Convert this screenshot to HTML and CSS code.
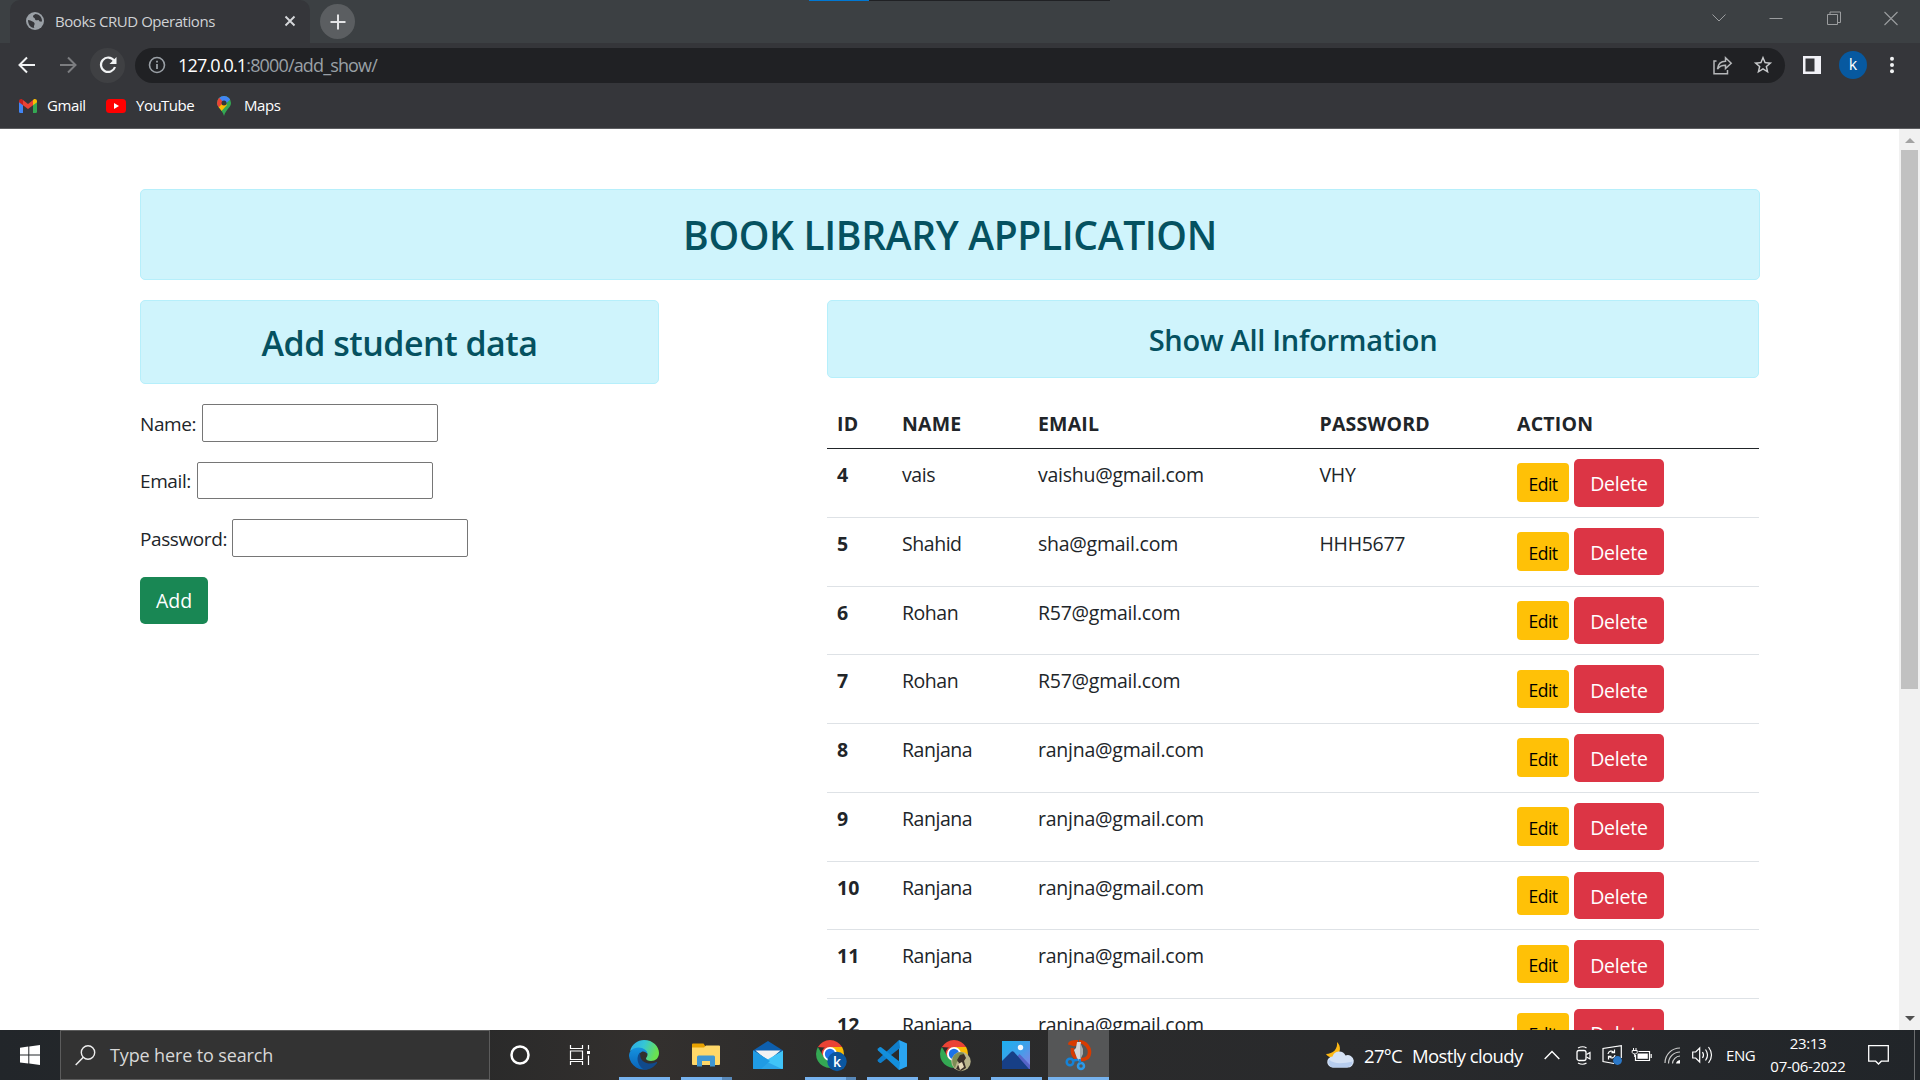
FILE: index.html
```html
<!DOCTYPE html>
<html lang="en">
<head>
<meta charset="utf-8">
<title>Books CRUD Operations</title>
<link rel="stylesheet" href="styles.css">
</head>
<body>
<header class="browser">
  <div class="tabstrip">
    <div class="tab">
      <svg class="tab-globe" viewBox="0 0 18 18" width="18" height="18"><circle cx="9" cy="9" r="9" fill="#9aa0a6"/><path d="M2 8c2 0 3 1 4.500 1.500S9 11 8.500 12.500 7.500 15 8.500 16C5 16 2 13 2 8zM9.500 2c-1 1-2.500 1-2.500 2.500S9 5.500 9 7s2 1.500 3 1 1 1.500 2 1.500 1.500.5 2-.5C16 5 13 2 9.500 2z" fill="#35363a"/></svg>
      <span class="tab-title">Books CRUD Operations</span>
      <svg class="tab-close" viewBox="0 0 12 12" width="12" height="12"><path d="M1.500 1.500l9 9M10.500 1.500l-9 9" stroke="#d5d7da" stroke-width="1.900"/></svg>
    </div>
    <div class="newtab"><svg viewBox="0 0 16 16" width="16" height="16"><path d="M8 .5v15M.5 8h15" stroke="#e3e4e6" stroke-width="2"/></svg></div>
    <div class="snap"><i class="snap-done"></i></div>
    <div class="winctl">
      <svg viewBox="0 0 14 14" width="14" height="14"><path d="M.5 3.500L7 10l6.500-6.500" fill="none" stroke="#9b9d9f"/></svg>
      <svg viewBox="0 0 14 14" width="14" height="14"><path d="M.5 7.500h13" stroke="#9b9d9f"/></svg>
      <svg viewBox="0 0 14 14" width="14" height="14"><path d="M.5 3.500h10v10H.5zM3 3V1h10.500v10.500H11" fill="none" stroke="#9b9d9f"/></svg>
      <svg viewBox="0 0 14 14" width="14" height="14"><path d="M.5 1l13 13M13.500 1l-13 13" stroke="#9b9d9f" stroke-width="1.100"/></svg>
    </div>
  </div>
  <div class="toolbar">
    <svg class="nav-back" viewBox="0 0 18 18" width="18" height="18"><path d="M17 9H2M9 1.500L1.500 9 9 16.500" fill="none" stroke="#f1f3f4" stroke-width="2"/></svg>
    <svg class="nav-fwd" viewBox="0 0 18 18" width="18" height="18"><path d="M1 9h15M9 1.500L16.500 9 9 16.500" fill="none" stroke="#7c7d80" stroke-width="2"/></svg>
    <span class="nav-reload"><svg viewBox="0 0 18 18" width="18" height="18"><path d="M15 4.500A7.200 7.200 0 1 0 16 11" fill="none" stroke="#f1f3f4" stroke-width="2.200"/><path d="M17.500 1v7h-7z" fill="#f1f3f4"/></svg></span>
    <div class="omnibox">
      <svg viewBox="0 0 18 18" width="18" height="18"><circle cx="9" cy="9" r="7.500" fill="none" stroke="#9aa0a6" stroke-width="1.600"/><path d="M9 8v5M9 4.700v1.900" stroke="#9aa0a6" stroke-width="1.800"/></svg>
      <span class="url"><b>127.0.0.1</b>:8000/add_show/</span>
      <svg class="share" viewBox="0 0 20 19" width="20" height="19"><path d="M3.500 5H1v12.700h13.500V14" fill="none" stroke="#b5b7b9" stroke-width="1.500"/><path d="M4.500 13c.6-5 3.500-7.800 8-7.800V1.800l5.700 5.400-5.700 5.300V9.300c-3.500 0-6 .9-8 3.700z" fill="none" stroke="#b5b7b9" stroke-width="1.500"/></svg>
      <svg class="star" viewBox="0 0 24 24" width="22" height="22"><path d="M22 9.240l-7.190-.62L12 2 9.190 8.630 2 9.240l5.460 4.730L5.820 21 12 17.270 18.180 21l-1.630-7.030L22 9.240zM12 15.400l-3.760 2.270 1-4.280-3.320-2.880 4.380-.38L12 6.100l1.710 4.040 4.380.38-3.320 2.880 1 4.280L12 15.400z" fill="#c8cacc"/></svg>
    </div>
    <svg class="panel" viewBox="0 0 18 18" width="18" height="18"><path d="M0 0h18v18H0zM2.500 2.500v13h9v-13z" fill="#f1f1f6" fill-rule="evenodd"/></svg>
    <span class="avatar">k</span>
    <svg class="dots" viewBox="0 0 4 18" width="4" height="18"><circle cx="2" cy="2.700" r="2" fill="#f1f3f4"/><circle cx="2" cy="9" r="2" fill="#f1f3f4"/><circle cx="2" cy="15.300" r="2" fill="#f1f3f4"/></svg>
  </div>
  <nav class="bookmarks">
    <svg viewBox="0 0 18 14" width="18" height="14"><path d="M0 2v10.500Q0 14 1.300 14H4V5z" fill="#4285f4"/><path d="M18 2v10.500q0 1.500-1.300 1.500H14V5z" fill="#34a853"/><path d="M4 1l5 4 5-4v5.200L9 10 4 6.200z" fill="#ea4335"/><path d="M0 2.200C0 .3 2 -.5 3.400.5L4 1v5.200L0 3.300z" fill="#c5221f"/><path d="M18 2.200C18 .3 16-.5 14.600.5L14 1v5.200l4-2.900z" fill="#fbbc04"/></svg>
    <span class="bm-gmail">Gmail</span>
    <svg viewBox="0 0 20 14" width="20" height="14"><rect width="20" height="14" rx="3.500" fill="#f00"/><path d="M8 4l5 3-5 3z" fill="#fff"/></svg>
    <span class="bm-yt">YouTube</span>
    <svg viewBox="0 0 14 20" width="14" height="20"><defs><clipPath id="pin"><path d="M7 0a7 7 0 0 1 7 7c0 4.500-5 6-7 13C5 13 0 11.500 0 7a7 7 0 0 1 7-7z"/></clipPath></defs><g clip-path="url(#pin)"><path d="M0 0h14v20H0z" fill="#34a853"/><path d="M0 0h14v3L7 9 1.500 3z" fill="#4285f4"/><path d="M0 3l2-1.500L7 7l-5.500 6L0 10z" fill="#ea4335"/><path d="M1 12l6-6 3 3-6.500 7z" fill="#fbbc04"/></g><circle cx="7" cy="7" r="2.500" fill="#35363a"/></svg>
    <span class="bm-maps">Maps</span>
  </nav>
</header>

<div class="viewport">
  <main class="page">
    <h1 class="alert title">BOOK LIBRARY APPLICATION</h1>
    <div class="columns">
      <section class="add">
        <h2 class="alert add-title">Add student data</h2>
        <form class="form">
          <div class="field"><label for="name">Name:</label><input id="name" type="text"></div>
          <div class="field field-email"><label for="email">Email:</label><input id="email" type="email"></div>
          <div class="field field-pass"><label for="password">Password:</label><input id="password" type="password"></div>
          <button class="btn btn-success" type="button">Add</button>
        </form>
      </section>
      <section class="list">
        <h3 class="alert list-title">Show All Information</h3>
        <table class="table">
          <colgroup><col class="c-id"><col class="c-name"><col class="c-email"><col class="c-pass"><col></colgroup>
          <thead><tr><th>ID</th><th>NAME</th><th>EMAIL</th><th>PASSWORD</th><th>ACTION</th></tr></thead>
          <tbody>
            <tr><th>4</th><td>vais</td><td class="mail">vaishu@gmail.com</td><td class="pass">VHY</td><td><div class="actions"><button class="btn btn-warning">Edit</button><button class="btn btn-danger">Delete</button></div></td></tr>
            <tr><th>5</th><td>Shahid</td><td class="mail">sha@gmail.com</td><td class="pass">HHH5677</td><td><div class="actions"><button class="btn btn-warning">Edit</button><button class="btn btn-danger">Delete</button></div></td></tr>
            <tr><th>6</th><td>Rohan</td><td class="mail">R57@gmail.com</td><td></td><td><div class="actions"><button class="btn btn-warning">Edit</button><button class="btn btn-danger">Delete</button></div></td></tr>
            <tr><th>7</th><td>Rohan</td><td class="mail">R57@gmail.com</td><td></td><td><div class="actions"><button class="btn btn-warning">Edit</button><button class="btn btn-danger">Delete</button></div></td></tr>
            <tr><th>8</th><td>Ranjana</td><td class="mail">ranjna@gmail.com</td><td></td><td><div class="actions"><button class="btn btn-warning">Edit</button><button class="btn btn-danger">Delete</button></div></td></tr>
            <tr><th>9</th><td>Ranjana</td><td class="mail">ranjna@gmail.com</td><td></td><td><div class="actions"><button class="btn btn-warning">Edit</button><button class="btn btn-danger">Delete</button></div></td></tr>
            <tr><th>10</th><td>Ranjana</td><td class="mail">ranjna@gmail.com</td><td></td><td><div class="actions"><button class="btn btn-warning">Edit</button><button class="btn btn-danger">Delete</button></div></td></tr>
            <tr><th>11</th><td>Ranjana</td><td class="mail">ranjna@gmail.com</td><td></td><td><div class="actions"><button class="btn btn-warning">Edit</button><button class="btn btn-danger">Delete</button></div></td></tr>
            <tr><th>12</th><td>Ranjana</td><td class="mail">ranjna@gmail.com</td><td></td><td><div class="actions"><button class="btn btn-warning">Edit</button><button class="btn btn-danger">Delete</button></div></td></tr>
          </tbody>
        </table>
      </section>
    </div>
  </main>
  <div class="scrollbar">
    <svg viewBox="0 0 10 5" width="10" height="5"><path d="M0 5l5-5 5 5z" fill="#a3a3a3"/></svg>
    <i class="thumb"></i>
    <svg class="down" viewBox="0 0 10 5" width="10" height="5"><path d="M0 0l5 5 5-5z" fill="#505050"/></svg>
  </div>
</div>

<footer class="taskbar">
  <div class="start"><svg viewBox="0 0 20 20" width="20" height="20"><path d="M0 2.700L8.300 1.600v8H0zM9.300 1.400L20 0v9.600H9.300zM0 10.500h8.300v8L0 17.400zM9.300 10.500H20V20L9.300 18.600z" fill="#fff"/></svg></div>
  <div class="search"><svg viewBox="0 0 21 21" width="21" height="21"><circle cx="13" cy="7.500" r="6.700" fill="none" stroke="#eee" stroke-width="1.400"/><path d="M8.300 12.300L.7 20" stroke="#eee" stroke-width="1.500"/></svg><span>Type here to search</span></div>
  <svg class="cortana" viewBox="0 0 20 20" width="20" height="20"><circle cx="10" cy="10" r="8.500" fill="none" stroke="#fff" stroke-width="2.500"/></svg>
  <svg class="taskview" viewBox="0 0 20 20" width="20" height="20"><path d="M.5 0v3.500h12V0M.5 6h12v8.500H.5zM.5 20v-3.500h12V20M18.500 0v4.500M18.500 10.500V20" fill="none" stroke="#fff" stroke-width="1.200"/><path d="M17 6h3v3h-3z" fill="#fff"/></svg>
  <div class="apps">
    <div class="app run">
      <svg viewBox="0 0 30 30" width="30" height="30"><defs><linearGradient id="e1" x1="0" y1="0" x2="1" y2=".3"><stop offset="0" stop-color="#2ba6e8"/><stop offset=".5" stop-color="#35c6d6"/><stop offset="1" stop-color="#6ae250"/></linearGradient><linearGradient id="e2" x1="0" y1="0" x2="0" y2="1"><stop offset="0" stop-color="#1593e0"/><stop offset="1" stop-color="#0a63b8"/></linearGradient></defs><path d="M1 11C3 4 8.500 0 15 0c9 0 15 6.500 15 13 0 5-3.500 8-8 8-3 0-5-1.200-5-2.500 0-1 1.500-1.500 1.500-4C18.500 11 14 9 10 9c-4 0-7.500 1.500-9 2z" fill="url(#e1)"/><path d="M0 16C0 11 4 7.500 9.500 7.500c5 0 9 3 9 6.500-1.500-2-4-3-6-2-3 1.500-4 5.500-2 9.500 2 4.500 6 7 10 7A15 15 0 0 1 0 16z" fill="url(#e2)"/><path d="M11 12.500c-4 4-3.500 12 4 17.300 5 .3 10-2.300 13-6.800.4-.8-.2-1.200-1-.8-7 3-14 .5-15.500-5-.4-1.700-.4-3.200-.5-4.700z" fill="#114a8b"/></svg>
    </div>
    <div class="app run multi">
      <svg viewBox="0 0 28 24" width="28" height="24"><path d="M0 1.500Q0 .5 1 .5h10.500l2 3H28v5H0z" fill="#e8a200"/><path d="M0 4.500h12l2-2h13q1 0 1 1V21q0 1-1 1H1q-1 0-1-1z" fill="#ffd869"/><path d="M5 23.500V14q0-1.500 1.500-1.500h15q1.500 0 1.500 1.500v9.500h-5V18h-8v5.500z" fill="#3f97d3"/></svg>
    </div>
    <div class="app">
      <svg viewBox="0 0 30 28" width="30" height="28"><path d="M0 9.500L15 0l15 9.500-15 9z" fill="#0d5fae"/><path d="M2.500 9.500h25L15 20z" fill="#f3f3f3"/><path d="M0 9.500l30 18q0 .5-1 .5H1q-1 0-1-1z" fill="#2ba4e8"/><path d="M30 9.500L12 20l17 8q1 0 1-1z" fill="#40c4f8"/><path d="M0 9.500L17 20 8 28H1q-1 0-1-1z" fill="#209be4"/></svg>
    </div>
    <div class="app run multi badged">
      <svg viewBox="0 0 31 31" width="31" height="31"><path d="M1.900 7A14 14 0 0 1 26.100 7L14 8z" fill="#ea4335"/><circle cx="14" cy="14" r="8.500" fill="#ea4335"/><path d="M1.900 7A14 14 0 0 0 14 28l6-10.500-12 0z" fill="#34a853"/><path d="M14 28A14 14 0 0 0 26.100 7H14l6 10.500z" fill="#fbbc04"/><circle cx="14" cy="14" r="7" fill="#fff"/><circle cx="14" cy="14" r="5.200" fill="#1a73e8"/><circle cx="21" cy="21.500" r="9.700" fill="#0b57a0"/><text x="21" y="26.500" text-anchor="middle" class="badge-k">k</text></svg>
    </div>
    <div class="app run">
      <svg viewBox="0 0 30 30" width="30" height="30"><path d="M22 0l8 3.500v23L22 30z" fill="#2aa5f2"/><path d="M22 0L1 19.500q-1 1 0 2l1.500 1.300q.8.600 1.700 0L23 8z" fill="#0f7ecb"/><path d="M22 30L1 10.500q-1-1 0-2l1.500-1.300q.8-.6 1.700 0L23 22z" fill="#138fdc"/></svg>
    </div>
    <div class="app run badged">
      <svg viewBox="0 0 31 31" width="31" height="31"><path d="M1.900 7A14 14 0 0 1 26.100 7L14 8z" fill="#ea4335"/><circle cx="14" cy="14" r="8.500" fill="#ea4335"/><path d="M1.900 7A14 14 0 0 0 14 28l6-10.500-12 0z" fill="#34a853"/><path d="M14 28A14 14 0 0 0 26.100 7H14l6 10.500z" fill="#fbbc04"/><circle cx="14" cy="14" r="7" fill="#fff"/><circle cx="14" cy="14" r="5.200" fill="#1a73e8"/><circle cx="21" cy="21.500" r="9.700" fill="#b9b48b"/><path d="M13 17c2-4 7-6 11-4l-2 6-5 3-2 6c-3-3-3-8-2-11z" fill="#7c8d54"/><path d="M20 15l4-1 2 4-2 3 2 7-5 3-5-2 3-6-2-3z" fill="#3b3029"/><path d="M18 24l4-2 2 5-4 3z" fill="#e6d9b8"/></svg>
    </div>
    <div class="app run">
      <svg viewBox="0 0 28 28" width="28" height="28"><defs><linearGradient id="ph" x1="0" y1="0" x2="1" y2="1"><stop offset="0" stop-color="#1cb0f0"/><stop offset=".5" stop-color="#3fa0ea"/><stop offset="1" stop-color="#8d7ce0"/></linearGradient></defs><path d="M0 0h28v28H0z" fill="url(#ph)"/><path d="M13 18l4.500-5L28 24v4H13z" fill="#5664c8"/><path d="M0 20l9-9q1.500-1.300 3 0l15 17H0z" fill="#173f86"/><circle cx="18.500" cy="6.500" r="2.700" fill="#f5f8fc"/></svg>
    </div>
    <div class="app run active">
      <svg viewBox="0 0 28 30" width="28" height="30"><path d="M14 1.500C21 2 25 8 24.500 13S20 20 15 19.500 6.500 14 7.500 8" fill="none" stroke="#d83b01" stroke-width="3.500"/><path d="M3 4.500C3 1 7 0 13 0v5q-3 1.500-5 1z" fill="#d83b01"/><path d="M12 2h4v17l-3 2-4-11 2-2z" fill="#d4d6d8"/><path d="M15 2v18l3-6V9z" fill="#a6a9ab"/><circle cx="5" cy="22" r="3.300" fill="none" stroke="#1583d8" stroke-width="2.500"/><circle cx="16" cy="26" r="3" fill="none" stroke="#2c9ae8" stroke-width="2.500"/><path d="M8 20.500l5-.8M15 23l-.5-4" stroke="#1583d8" stroke-width="2.500"/></svg>
    </div>
  </div>
  <div class="tray">
    <svg class="weather" viewBox="0 0 27 26" width="27" height="26"><path d="M11 0c4.500 4 4 12-2 14.500-4 1.500-7.500.5-9-2.500C7 12 12 7 11 0z" fill="#fdb813"/><path d="M7 25.500a5.500 5.500 0 0 1-.5-11 7 7 0 0 1 13-1 6.200 6.200 0 1 1 1.500 12z" fill="#d5e2f5"/><path d="M7 25.500a5.500 5.500 0 0 1-4-8c5 5 14 4 23.500 2a6 6 0 0 1-5.500 6z" fill="#b7cdee"/></svg>
    <span class="temp">27°C</span>
    <span class="cond">Mostly cloudy</span>
    <svg class="up" viewBox="0 0 16 10" width="16" height="10"><path d="M.7 9L8 1.500 15.300 9" fill="none" stroke="#fff" stroke-width="1.400"/></svg>
    <svg class="meet" viewBox="0 0 15 19" width="15" height="19"><rect x="1" y="4.500" width="9" height="10" rx="2" fill="none" stroke="#fff" stroke-width="1.300"/><path d="M10.500 8.500l3.500-2v6.500l-3.500-2M2 2q5-2.500 8.500 0M2 17q5 2.500 8.500 0" fill="none" stroke="#fff" stroke-width="1.200"/></svg>
    <svg class="sync" viewBox="0 0 20 20" width="20" height="20"><path d="M12 18.500l-11-2v-13L19.300.7V13" fill="none" stroke="#fff" stroke-width="1.200"/><path d="M6 9c.5-3 4-4 6-1.500M12.500 4.500v3.200h-3M13 10c-.5 3-4 4-6 1.500M6.500 14.500v-3.200h3" fill="none" stroke="#fff" stroke-width="1.200"/><circle cx="15.500" cy="15.500" r="4.400" fill="#2b78c8"/></svg>
    <svg class="batt" viewBox="0 0 20 14" width="20" height="14"><path d="M3.500 7v5.500h14v-9h-11M19.200 6v4" fill="none" stroke="#fff" stroke-width="1.200"/><path d="M5.500 5.500h10.300v5.300H5.500z" fill="#fff"/><path d="M1.500 0v2.500M4 0v2.500M.2 2.500h5v2L3.700 6H1.700L.2 4.500zM2.700 6v3" fill="none" stroke="#fff"/></svg>
    <svg class="wifi" viewBox="0 0 17 17" width="17" height="17"><path d="M1 16A15 15 0 0 1 16 1M4.500 16.500A11.500 11.500 0 0 1 16 5M8.500 16.500A8 8 0 0 1 16 9" fill="none" stroke="#ccc" stroke-width="1.200"/><path d="M12 16.500q.5-3 4-3.500v3.500z" fill="#fff"/></svg>
    <svg class="vol" viewBox="0 0 21 18" width="21" height="18"><path d="M.7 6h3l4-4v14l-4-4h-3zM10.500 6q2 3 0 6M13.500 3.500q4 5.500 0 11M16.500 1q6 8 0 16" fill="none" stroke="#fff" stroke-width="1.200"/></svg>
    <span class="lang">ENG</span>
    <div class="clock"><span class="time">23:13</span><span class="date">07-06-2022</span></div>
    <svg class="note" viewBox="0 0 21 21" width="21" height="21"><path d="M.7.7h19.600v15.500h-7L10.500 19l-2.800-2.800h-7z" fill="none" stroke="#fff" stroke-width="1.300"/></svg>
    <i class="peek"></i>
  </div>
</footer>
</body>
</html>
```
FILE: styles.css
```css
* { box-sizing: border-box; }
html, body { margin: 0; width: 1920px; height: 1080px; overflow: hidden; }
body {
  display: flex;
  flex-direction: column;
  font-family: "Open Sans", "Noto Sans", sans-serif;
  background: #fff;
  color: #212529;
}
svg { display: block; flex: none; overflow: visible; }
span, label { white-space: nowrap; }

/* Browser chrome */
.browser { height: 129px; background: #35363a; border-bottom: 1px solid #5d5e61; flex: none; }
.tabstrip { display: flex; height: 43px; background: #3c4043; padding-left: 10px; position: relative; }
.tab { display: flex; align-items: center; width: 300px; height: 43px; padding: 0 14px 2px 16px; background: #35363a; border-radius: 10px 10px 0 0; }
.tab-title { flex: 1; margin-left: 11px; font-size: 15px; letter-spacing: -0.45px; color: #d0d2d5; }
.newtab { display: flex; align-items: center; justify-content: center; width: 35px; height: 35px; margin: 4px 0 0 10px; border-radius: 50%; background: #5b5e61; }
.snap { position: absolute; left: 809px; top: 0; width: 301px; height: 1px; background: #202124; }
.snap-done { display: block; width: 60px; height: 1px; background: #0078d4; }
.winctl { display: flex; gap: 43.500px; margin-left: auto; padding: 11px 22px 0 0; }

.toolbar { display: flex; align-items: center; height: 44px; padding-left: 18px; }
.nav-fwd { margin-left: 23px; }
.nav-reload { display: flex; align-items: center; justify-content: center; width: 35px; height: 35px; margin-left: 13px; border-radius: 50%; background: #3f4043; }
.omnibox { display: flex; align-items: center; width: 1650px; height: 35px; margin-left: 10px; padding: 0 11px 0 13px; border-radius: 18px; background: #202124; }
.url { flex: 1; margin-left: 12px; font-size: 18px; letter-spacing: -0.85px; color: #9aa0a6; }
.url b { font-weight: 400; color: #fff; }
.star { margin-left: 19px; }
.panel { margin-left: 18px; }
.avatar { width: 28px; height: 28px; margin-left: 18px; border-radius: 50%; background: #0759a0; color: #fff; font-size: 16px; line-height: 27px; text-align: center; }
.dots { margin-left: 23px; }

.bookmarks { display: flex; align-items: center; height: 37px; padding-left: 19px; font-size: 15px; color: #fff; letter-spacing: -0.4px; }
.bookmarks span { padding-bottom: 2px; }
.bm-gmail { width: 59px; padding-left: 10px; margin-right: 10px; }
.bm-yt { width: 91px; padding-left: 10px; letter-spacing: -0.5px; }
.bm-maps { padding-left: 13px; }

/* Page */
.viewport { display: flex; flex: 1; min-height: 0; overflow: hidden; }
.page { flex: 1; padding: 60px 139px 0 140px; }
.alert {
  margin: 0 0 20px;
  padding: 20px;
  border: 1px solid #b6effb;
  border-radius: 5px;
  background: #cff4fc;
  color: #055160;
  font-weight: 600;
  text-align: center;
}
.title { height: 91px; font-size: 39px; letter-spacing: -0.35px; line-height: 50px; }
.columns { display: flex; padding-right: 1px; justify-content: space-between; }
.add { width: 519px; }
.list { width: 932px; }
.add-title { height: 84px; font-size: 34px; line-height: 44px; letter-spacing: -0.5px; }
.list-title { height: 78px; font-size: 29px; line-height: 38px; letter-spacing: -0.28px; }

.form { display: flex; flex-direction: column; gap: 20px; align-items: flex-start; font-size: 19px; }
.field { display: flex; align-items: center; height: 37.500px; }
.field label { width: 62px; letter-spacing: -0.4px; padding-top: 2px; }
.field-email label { width: 57px; }
.field-pass label { width: 92px; }
.field input { width: 236px; height: 37.500px; padding: 1px 2px; border: 1px solid #767676; border-radius: 2px; background: #fff; outline: none; }

.btn { border: 0; padding: 2px 0 0; border-radius: 5px; font: 400 19.500px "Open Sans", "Noto Sans", sans-serif; text-align: center; }
.btn-success { width: 68px; height: 47px; padding: 0; background: #198754; color: #fff; }
.btn-warning { width: 52px; height: 38.750px; border-radius: 4px; background: #ffc107; color: #000; font-size: 17.500px; letter-spacing: -0.5px; }
.btn-danger { width: 90px; height: 47.500px; background: #dc3545; color: #fff; letter-spacing: -0.2px; }
.actions { display: flex; align-items: center; gap: 5px; margin-top: -1px; }

.table { width: 932px; border-collapse: separate; border-spacing: 0; table-layout: fixed; font-size: 19.500px; line-height: 30px; }
.c-id { width: 65px; }
.c-name { width: 136px; }
.c-email { width: 281.500px; }
.c-pass { width: 197.500px; }
.table th, .table td { padding: 11px 10px 9px; text-align: left; vertical-align: top; white-space: nowrap; }
.table th { font-weight: 700; letter-spacing: 0.2px; }
.table td { letter-spacing: -0.45px; }
.table td.mail { letter-spacing: -0.24px; }
.table td.pass { letter-spacing: -0.3px; }
.table thead th { height: 51px; border-bottom: 1px solid #212529; }
.table tbody th, .table tbody td { height: 68.750px; border-bottom: 1px solid #dee2e6; }

.scrollbar { display: flex; flex-direction: column; align-items: center; width: 21px; padding: 9px 0 9px; background: #f1f1f1; }
.thumb { width: 17px; height: 539px; margin-top: 7px; background: #c1c1c1; }
.down { margin-top: auto; }

/* Taskbar */
.taskbar { display: flex; align-items: center; height: 50px; flex: none; background: linear-gradient(90deg, #22262a, #2a2a2a 25%, #33302e 34%, #2b2b2b 45%, #292a2c 70%, #212529); }
.start { width: 60px; padding-left: 20px; }
.search { display: flex; align-items: center; width: 430px; height: 50px; padding-left: 14px; border: 1px solid #5c5c5c; background: #333; color: #d8d8d8; font-size: 18px; }
.search span { margin-left: 14px; letter-spacing: -0.13px; }
.cortana { margin-left: 20px; }
.taskview { margin-left: 40px; }
.apps { display: flex; margin-left: 29px; gap: 11px; }
.app { display: flex; align-items: center; justify-content: center; width: 51px; height: 50px; border-bottom: 3px solid transparent; padding: 3px 2px 0 0; }
.badged { padding: 3px 0 0 2px; }
.run { border-bottom-color: #76b2ee; }
.multi { border-image: linear-gradient(90deg, #76b2ee 79%, #5888b8 79%) 1; border-width: 0 0 3px; border-style: solid; }
.active { width: 61px; margin-left: -5px; padding: 3px 0 0; background: #555657; }
.badge-k { font: 600 14px "Open Sans", sans-serif; fill: #fff; }
.tray { display: flex; align-items: center; flex: 1; height: 50px; color: #fff; margin-left: 217px; }
.temp { width: 48px; margin-left: 11px; font-size: 18.500px; letter-spacing: -0.7px; }
.cond { width: 132px; font-size: 18.500px; letter-spacing: -0.6px; }
.meet { margin-left: 16px; }
.sync { margin-left: 11px; }
.batt { margin-left: 10px; }
.wifi { margin-left: 12px; }
.vol { margin-left: 11px; }
.lang { width: 44px; margin-left: 13px; font-size: 15px; letter-spacing: -0.4px; }
.clock { display: flex; flex-direction: column; align-items: center; width: 76px; font-size: 15px; line-height: 23px; letter-spacing: -0.3px; }
.note { margin-left: 22px; }
.peek { width: 1px; height: 50px; margin-left: 25px; background: #6b6d6f; }
```
